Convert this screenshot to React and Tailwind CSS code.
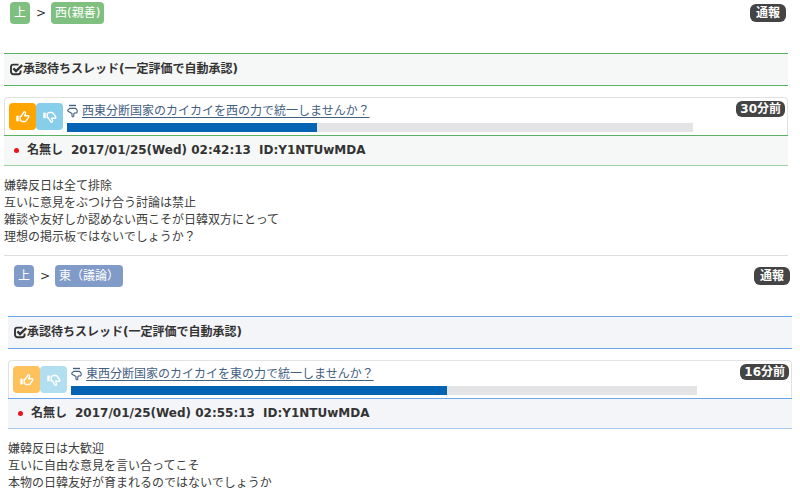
const bodyFont = "font-['DejaVu_Sans','Noto_Sans_CJK_JP',sans-serif]";

const themes = {
  green: {
    tag: 'bg-[#7fbf80]',
    bar: 'bg-[#f5f8f6] border-[#5cb066]',
    post: 'bg-[#f5f8f6] border-t-[#5cb066] border-b-[#9dcfa1]',
    up: 'bg-[#ffa500]',
    down: 'bg-[#87ceeb]',
  },
  blue: {
    tag: 'bg-[#819bc9]',
    bar: 'bg-[#f4f5f9] border-[#6ba6ea]',
    post: 'bg-[#f4f5f9] border-t-[#6ba6ea] border-b-[#a9cbee]',
    up: 'bg-[#ffc15c]',
    down: 'bg-[#b2dff0]',
  },
};

const boards = [
  {
    id: 'west',
    theme: 'green',
    name: '西(親善)',
    title: '西東分断国家のカイカイを西の力で統一しませんか？',
    ago: '30分前',
    progress: 40,
    date: '2017/01/25(Wed) 02:42:13',
    userId: 'ID:Y1NTUwMDA',
    lines: [
      '嫌韓反日は全て排除',
      '互いに意見をぶつけ合う討論は禁止',
      '雑談や友好しか認めない西こそが日韓双方にとって',
      '理想の掲示板ではないでしょうか？',
    ],
  },
  {
    id: 'east',
    theme: 'blue',
    name: '東（議論）',
    title: '東西分断国家のカイカイを東の力で統一しませんか？',
    ago: '16分前',
    progress: 60,
    date: '2017/01/25(Wed) 02:55:13',
    userId: 'ID:Y1NTUwMDA',
    lines: [
      '嫌韓反日は大歓迎',
      '互いに自由な意見を言い合ってこそ',
      '本物の日韓友好が育まれるのではないでしょうか',
    ],
  },
];

function CheckIcon() {
  return (
    <svg viewBox="0 0 14 14" className="size-3.5 shrink-0" fill="none" stroke="currentColor" aria-hidden="true">
      <path d="M9.5 1.6H4.4a2.4 2.4 0 0 0-2.4 2.4v4.8a2.4 2.4 0 0 0 2.4 2.4h4.8a2.4 2.4 0 0 0 2.4-2.4V7.6" strokeWidth="1.9" />
      <path d="M4.4 5.4l2.6 2.6 6.2-6" strokeWidth="2.4" />
    </svg>
  );
}

function ThumbIcon({ className }) {
  return (
    <svg viewBox="0 0 14 14" className={className} fill="none" stroke="currentColor" strokeLinejoin="round" aria-hidden="true">
      <path d="M1.5 5.8v5.6" strokeWidth="2.4" />
      <path d="M4.2 6.3h1L8 1.8c1.3-.4 1.8.7 1.5 1.7l-.8 2.3h3.4c.9 0 1 1.2.4 1.7l-2.4 3.4c-.3.4-.7.6-1.2.6H6l-1.8-1z" strokeWidth="1.4" />
    </svg>
  );
}

function HandDownIcon() {
  return (
    <svg viewBox="0 0 11 14" className="h-3.5 w-[11px] shrink-0" fill="none" stroke="currentColor" strokeLinejoin="round" aria-hidden="true">
      <path d="M2 1.5h7" strokeWidth="1.4" />
      <path d="M2.6 4.4h6l1.5 1.8v2c-.4.8-1.3 1-2.1.6L6.8 9.6v2.6c-.3 1-1.5 1-1.8 0V9.4L1 7.2c-.6-.7-.1-1.4.5-1.6z" strokeWidth="1.1" />
    </svg>
  );
}

function Board({ board, className }) {
  const theme = themes[board.theme];

  return (
    <section className={className}>
      <nav className="flex items-start justify-between pr-0.5 pl-1.5">
        <div className="flex items-center">
          <a href="#top" className={`rounded px-1 py-0.5 leading-[18px] text-white ${theme.tag}`}>上</a>
          <span className="pr-[5px] pl-1.5">&gt;</span>
          <a href={`#${board.id}`} className={`rounded px-1 py-0.5 leading-[18px] text-white ${theme.tag}`}>{board.name}</a>
        </div>
        <button type="button" className="mt-0.5 rounded-md bg-[#444] px-1.5 leading-[18px] font-bold text-white">通報</button>
      </nav>

      <h2 className={`mt-[29px] flex items-center border-y pl-[5px] leading-[31px] font-bold ${theme.bar}`}>
        <CheckIcon />
        承認待ちスレッド(一定評価で自動承認)
      </h2>

      <article className="mt-[11px]">
        <div className="flex gap-1 rounded-t border border-b-0 border-[#e2e2e2] pt-0.5 pl-1">
          <div className="mt-[3px] flex">
            <button type="button" aria-label="賛成" className={`flex h-[27px] w-[27px] items-center justify-center rounded text-white ${theme.up}`}>
              <ThumbIcon className="size-3.5" />
            </button>
            <button type="button" aria-label="反対" className={`flex h-[27px] w-[27px] items-center justify-center rounded text-white ${theme.down}`}>
              <ThumbIcon className="size-3.5 -scale-y-100" />
            </button>
          </div>
          <div className="flex-1 pb-[3px]">
            <div className="flex h-[23px] items-start justify-between pr-0.5 text-[#44607f]">
              <a href={`#${board.id}-thread`} className="flex items-center gap-1 leading-[22px]">
                <HandDownIcon />
                <span className="underline underline-offset-2">{board.title}</span>
              </a>
              <time className="mt-px rounded-md bg-[#444] px-1 leading-4 font-bold text-white">{board.ago}</time>
            </div>
            <div role="progressbar" aria-label="評価" aria-valuenow={board.progress} className="mr-[94px] h-[9px] bg-[#e4e4e6]">
              <div className="h-full bg-[#0563b3]" style={{ width: `${board.progress}%` }} />
            </div>
          </div>
        </div>
        <h3 className={`flex items-center gap-2 border-y pl-2.5 leading-[29px] font-bold ${theme.post}`}>
          <span className="size-[5px] rounded-full bg-[#e8141c]" />
          <span>名無し</span>
          <span>{board.date}</span>
          <span>{board.userId}</span>
        </h3>
        <p className="pt-3 leading-[17px] text-[#3c3c3c]">
          {board.lines.map((line) => (
            <span key={line} className="block">{line}</span>
          ))}
        </p>
      </article>
    </section>
  );
}

export default function App() {
  return (
    <main className={`bg-white pt-0.5 text-xs text-[#333] ${bodyFont}`}>
      <Board board={boards[0]} className="mr-3 ml-1 border-b border-[#ddd] pb-[9px]" />
      <Board board={boards[1]} className="mx-2 pt-[9px]" />
    </main>
  );
}
